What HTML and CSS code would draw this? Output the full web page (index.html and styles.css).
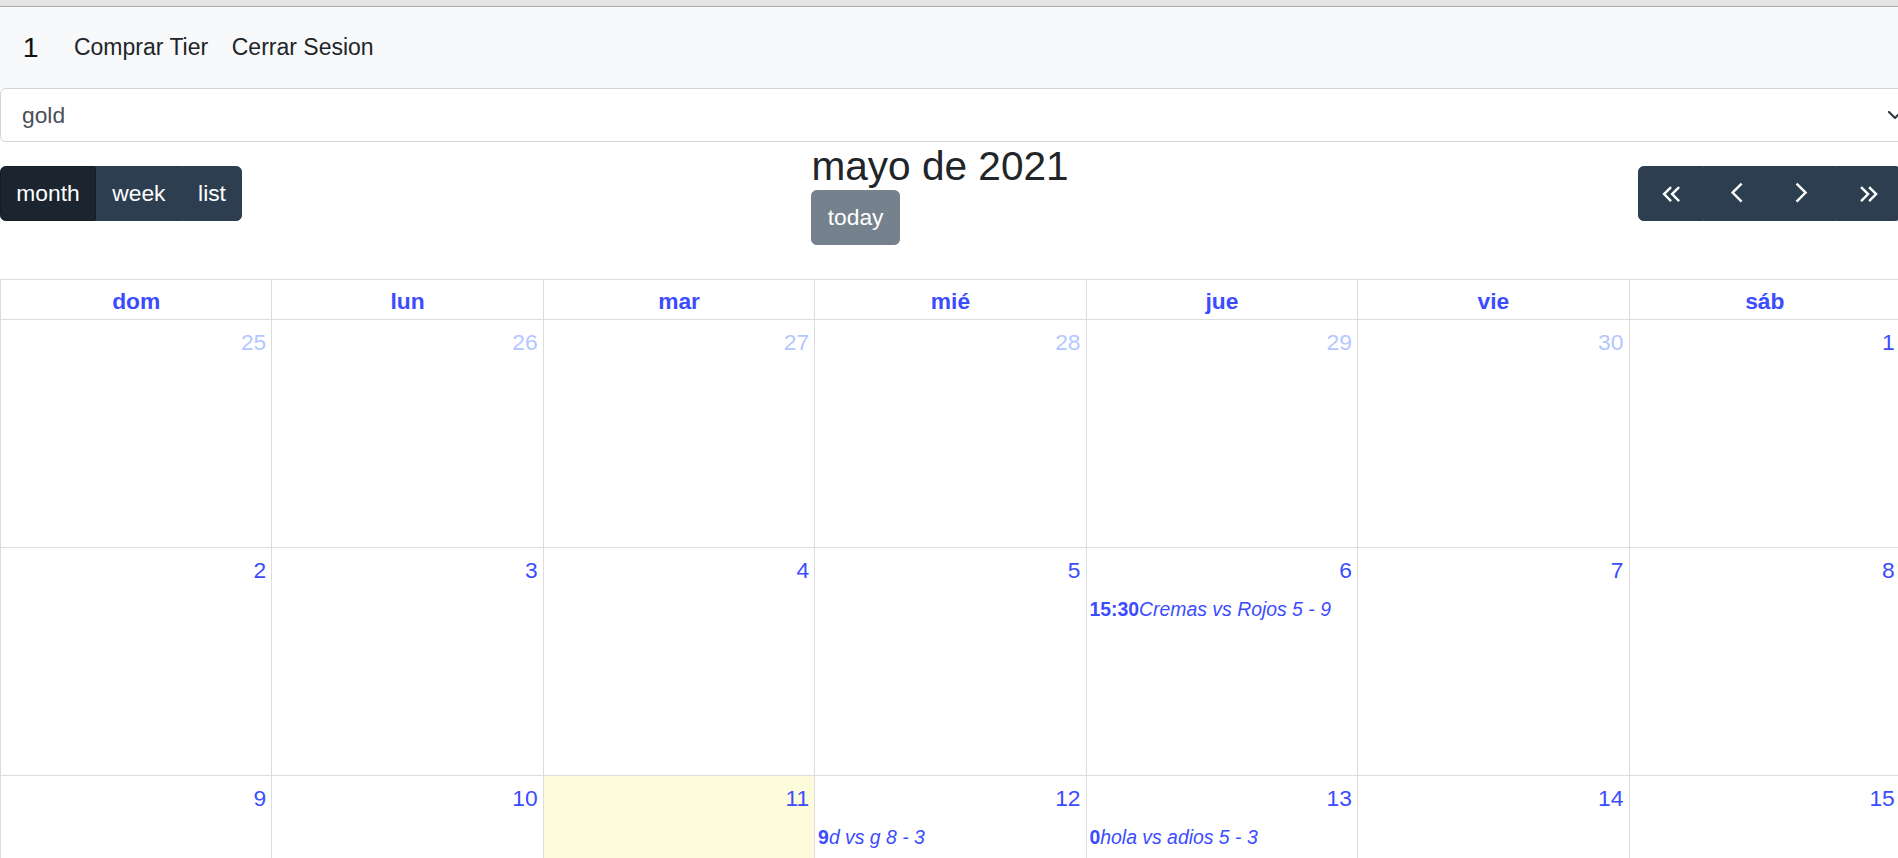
FILE: index.html
```html
<!DOCTYPE html>
<html lang="es">
<head>
<meta charset="utf-8">
<title>Calendario</title>
<link rel="stylesheet" href="styles.css">
</head>
<body>
<div class="chrome"></div>
<nav class="navbar">
  <span class="brand">1</span>
  <a class="nav-link">Comprar Tier</a>
  <a class="nav-link">Cerrar Sesion</a>
</nav>
<div class="select">
  <span>gold</span>
  <svg class="caret" width="14" height="8" viewBox="0 0 14 8"><polyline points="1,1 7,7 13,1" fill="none" stroke="#343a40" stroke-width="2.2" stroke-linecap="round" stroke-linejoin="round"/></svg>
</div>
<div class="calendar">
  <div class="toolbar">
    <div class="btn-group">
      <button class="btn active">month</button><button class="btn">week</button><button class="btn">list</button>
    </div>
    <div class="center">
      <h2 class="title">mayo de 2021</h2>
      <button class="btn today">today</button>
    </div>
    <div class="btn-group">
      <button class="btn icon"><svg viewBox="0 0 34 34"><path d="M17 11 L10 18 L17 25 M25 11 L18 18 L25 25"/></svg></button><button class="btn icon"><svg viewBox="0 0 34 34"><path d="M22.5 7.5 L13.5 16.5 L22.5 25.5"/></svg></button><button class="btn icon"><svg viewBox="0 0 34 34"><path d="M11.5 7.5 L20.5 16.5 L11.5 25.5"/></svg></button><button class="btn icon"><svg viewBox="0 0 34 34"><path d="M10 11 L17 18 L10 25 M18 11 L25 18 L18 25"/></svg></button>
    </div>
  </div>
  <div class="grid">
    <div class="hcell">dom</div><div class="hcell">lun</div><div class="hcell">mar</div><div class="hcell">mié</div><div class="hcell">jue</div><div class="hcell">vie</div><div class="hcell">sáb</div>

    <div class="day other"><div class="num">25</div></div>
    <div class="day other"><div class="num">26</div></div>
    <div class="day other"><div class="num">27</div></div>
    <div class="day other"><div class="num">28</div></div>
    <div class="day other"><div class="num">29</div></div>
    <div class="day other"><div class="num">30</div></div>
    <div class="day"><div class="num">1</div></div>

    <div class="day"><div class="num">2</div></div>
    <div class="day"><div class="num">3</div></div>
    <div class="day"><div class="num">4</div></div>
    <div class="day"><div class="num">5</div></div>
    <div class="day"><div class="num">6</div><div class="ev"><b>15:30</b><i>Cremas vs Rojos 5 - 9</i></div></div>
    <div class="day"><div class="num">7</div></div>
    <div class="day"><div class="num">8</div></div>

    <div class="day"><div class="num">9</div></div>
    <div class="day"><div class="num">10</div></div>
    <div class="day today"><div class="num">11</div></div>
    <div class="day"><div class="num">12</div><div class="ev"><b>9</b><i>d vs g 8 - 3</i></div></div>
    <div class="day"><div class="num">13</div><div class="ev"><b>0</b><i>hola vs adios 5 - 3</i></div></div>
    <div class="day"><div class="num">14</div></div>
    <div class="day"><div class="num">15</div></div>

    <div class="day"><div class="num">16</div></div>
    <div class="day"><div class="num">17</div></div>
    <div class="day"><div class="num">18</div></div>
    <div class="day"><div class="num">19</div></div>
    <div class="day"><div class="num">20</div></div>
    <div class="day"><div class="num">21</div></div>
    <div class="day"><div class="num">22</div></div>
  </div>
</div>
</body>
</html>
```

FILE: styles.css
```css
html, body {
  margin: 0;
  overflow: hidden;
}
body {
  font-family: "Liberation Sans", Arial, sans-serif;
  font-size: 22.8px;
  line-height: 34.2px;
  color: #212529;
  background: #fff;
}
.chrome {
  height: 6px;
  background: #e4e4e4;
  border-bottom: 1px solid #a9a9a9;
}
.navbar {
  display: flex;
  align-items: center;
  height: 81px;
  box-sizing: border-box;
  padding: 0 22.8px;
  background: #f8f9fa;
}
.brand {
  font-size: 28.5px;
  line-height: 42.75px;
  margin-right: 23.5px;
  color: #111;
}
.nav-link {
  font-size: 23px;
  padding: 0 11.8px;
  color: #212529;
}
.select {
  width: 1925px;
  height: 54px;
  box-sizing: border-box;
  border: 1px solid #ced4da;
  border-radius: 5.7px;
  padding: 0 22px 0 21px;
  display: flex;
  align-items: center;
  color: #495057;
}
.caret {
  margin-left: auto;
}
.calendar {
  width: 1901px;
}
.toolbar {
  display: flex;
  justify-content: space-between;
  align-items: center;
  margin-bottom: 34.2px;
}
.btn-group {
  display: flex;
}
.btn {
  display: inline-flex;
  align-items: center;
  font-family: inherit;
  font-size: 22.8px;
  line-height: 34.2px;
  padding: 9.3px 15.3px;
  border: 1px solid #2c3e50;
  background: #2c3e50;
  color: #fff;
  border-radius: 0;
  margin: 0;
}
.btn-group .btn:first-child {
  border-top-left-radius: 5.7px;
  border-bottom-left-radius: 5.7px;
}
.btn-group .btn:last-child {
  border-top-right-radius: 5.7px;
  border-bottom-right-radius: 5.7px;
}
.btn.active {
  background: #1a252f;
  border-color: #151e27;
}
.btn.icon {
  padding: 9.3px 14.8px;
}
.btn.icon svg {
  width: 34.2px;
  height: 34.2px;
  fill: none;
  stroke: #fff;
  stroke-width: 2.4;
}
.center {
  display: flex;
  flex-direction: column;
  align-items: flex-start;
}
.title {
  margin: 0;
  font-size: 40.6px;
  line-height: 48px;
  font-weight: normal;
  color: #212529;
}
.btn.today {
  border-radius: 5.7px;
  opacity: .65;
}
.grid {
  display: grid;
  grid-template-columns: repeat(7, 1fr);
  border-top: 1px solid #ddd;
  border-left: 1px solid #ddd;
}
.hcell {
  height: 40px;
  box-sizing: border-box;
  padding-top: 4px;
  line-height: 34px;
  text-align: center;
  font-weight: bold;
  color: #3b4cff;
  border-right: 1px solid #ddd;
  border-bottom: 1px solid #ddd;
}
.day {
  height: 228px;
  box-sizing: border-box;
  border-right: 1px solid #ddd;
  border-bottom: 1px solid #ddd;
  color: #3b4cff;
}
.day.today {
  background: #fcfcdc;
}
.num {
  text-align: right;
  padding: 4.7px 5.2px 6.7px 5.7px;
  line-height: 34.2px;
}
.day.other .num {
  color: #b4c8ff;
}
.ev {
  font-size: 19.4px;
  line-height: 29px;
  margin: 1.4px 2.8px 0;
  white-space: nowrap;
}
.ev b {
  font-weight: bold;
}
```
